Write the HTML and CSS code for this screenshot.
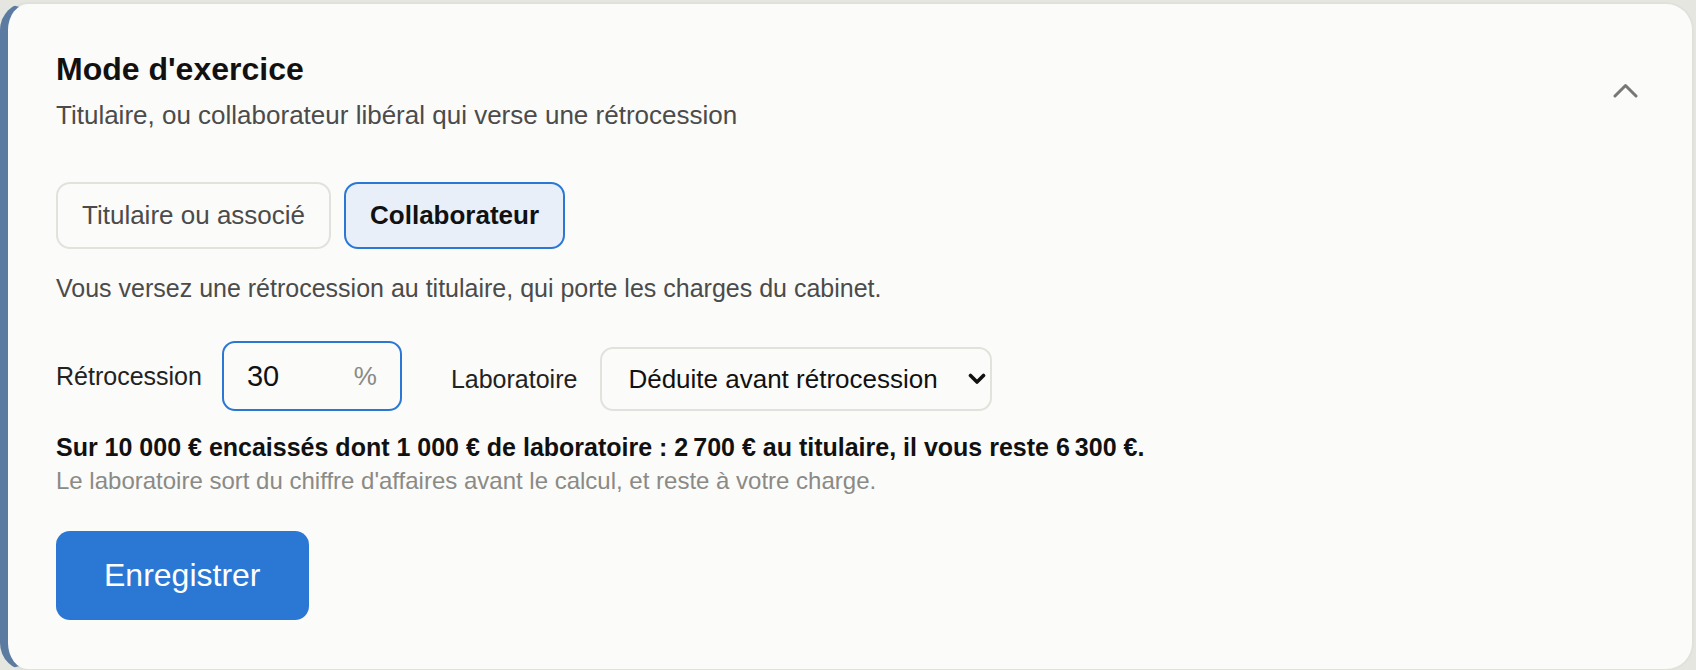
FILE: index.html
```html
<!DOCTYPE html>
<html lang="fr">

<head>
    <meta charset="UTF-8" />
    <meta name="viewport" content="width=device-width, initial-scale=1.0" />
    <title>Mode d'exercice</title>
    <link rel="stylesheet" href="styles.css">
</head>

<body>
    <section class="panel">
        <!-- En-tête repliable -->
        <header class="panel-header">
            <div>
                <h2>Mode d'exercice</h2>
                <p class="panel-sub">Titulaire, ou collaborateur libéral qui verse une rétrocession</p>
            </div>
            <button class="collapse-btn" type="button" aria-label="Replier">
                <svg width="26" height="16" viewBox="0 0 26 16">
                    <polyline points="3,13 13.5,2.5 24,13" fill="none" stroke="#777773" stroke-width="3" stroke-linecap="round" stroke-linejoin="round" />
                </svg>
            </button>
        </header>

        <!-- Choix du statut -->
        <div class="mode-toggle">
            <button class="mode-btn" type="button">Titulaire ou associé</button>
            <button class="mode-btn is-active" type="button">Collaborateur</button>
        </div>
        <p class="mode-hint">Vous versez une rétrocession au titulaire, qui porte les charges du cabinet.</p>

        <!-- Paramètres de rétrocession -->
        <div class="fields-row">
            <label class="field">
                <span class="field-label">Rétrocession</span>
                <span class="pct-input">
                    <input type="text" value="30" />
                    <span class="pct-unit">%</span>
                </span>
            </label>
            <label class="field field-select">
                <span class="field-label">Laboratoire</span>
                <span class="select-wrap">
                    <select>
                        <option>Déduite avant rétrocession</option>
                        <option>Incluse dans la rétrocession</option>
                    </select>
                    <svg class="select-arrow" width="18" height="12" viewBox="0 0 18 12">
                        <polyline points="2.5,2.5 9,9 15.5,2.5" fill="none" stroke="#111" stroke-width="3.6" stroke-linecap="round" stroke-linejoin="round" />
                    </svg>
                </span>
            </label>
        </div>

        <p class="summary">Sur 10 000 € encaissés dont 1 000 € de laboratoire : 2&#8239;700 € au titulaire, il vous reste 6&#8239;300 €.</p>
        <p class="summary-note">Le laboratoire sort du chiffre d'affaires avant le calcul, et reste à votre charge.</p>

        <button class="save-btn" type="button">Enregistrer</button>
    </section>
</body>

</html>
```

FILE: styles.css
```css
* {
    margin: 0;
    padding: 0;
    box-sizing: border-box;
    font-family: "Liberation Sans", Arial, sans-serif;
}

body {
    background-color: #e6e6e1;
    color: #111;
    padding: 2px 2px 3px 0;
}

/* Panel */

.panel {
    background: #fbfbf9;
    border: 2px solid #e1e1dc;
    border-left: 8px solid #5b7ba0;
    border-radius: 28px;
    padding: 45px 54px 49px 48px;
}

.panel-header {
    display: flex;
    justify-content: space-between;
    align-items: center;
}

.panel-header h2 {
    font-size: 32px;
    line-height: 40px;
    font-weight: 700;
    color: #111;
}

.panel-sub {
    margin-top: 8px;
    font-size: 26px;
    line-height: 36px;
    color: #4b4b4b;
}

.collapse-btn {
    border: none;
    background: none;
    display: flex;
    cursor: pointer;
}

/* Mode toggle */

.mode-toggle {
    display: flex;
    gap: 13px;
    margin-top: 49px;
}

.mode-btn {
    font-size: 26px;
    line-height: 31px;
    padding: 16px 24px;
    border: 2px solid #e2e2dd;
    border-radius: 14px;
    background: #fbfbf9;
    color: #4b4b4b;
    cursor: pointer;
}

.mode-btn.is-active {
    background: #e8eff9;
    border-color: #2b78d4;
    color: #111;
    font-weight: 700;
}

.mode-hint {
    margin-top: 21px;
    font-size: 25px;
    line-height: 36px;
    color: #4b4b4b;
}

/* Fields */

.fields-row {
    display: flex;
    align-items: flex-end;
    gap: 49px;
    margin-top: 35px;
}

.field {
    display: flex;
    align-items: center;
    gap: 20px;
}

.field-select {
    gap: 23px;
}

.field-label {
    font-size: 25px;
    color: #222;
}

.pct-input {
    display: flex;
    align-items: center;
    width: 180px;
    height: 70px;
    padding: 0 23px;
    border: 2px solid #2b78d4;
    border-radius: 13px;
    background: #fbfbf9;
}

.pct-input input {
    width: 80px;
    flex: 1;
    border: none;
    outline: none;
    background: transparent;
    font-size: 29px;
    color: #111;
}

.pct-unit {
    font-size: 26px;
    color: #8a8a86;
}

.select-wrap {
    position: relative;
    display: flex;
}

.select-wrap select {
    appearance: none;
    -webkit-appearance: none;
    width: 392px;
    height: 64px;
    padding: 0 40px 0 26px;
    border: 2px solid #e2e2dd;
    border-radius: 13px;
    background: #fbfbf9;
    font-size: 26px;
    color: #111;
}

.select-arrow {
    position: absolute;
    right: 6px;
    top: 26px;
    pointer-events: none;
}

/* Summary */

.summary {
    margin-top: 19px;
    font-size: 25px;
    line-height: 34px;
    font-weight: 700;
    color: #111;
}

.summary-note {
    font-size: 24px;
    line-height: 34px;
    color: #8a8a86;
}

.save-btn {
    margin-top: 33px;
    padding: 0 48px;
    height: 89px;
    border: none;
    border-radius: 14px;
    background: #2b78d4;
    color: #fff;
    font-size: 32px;
    cursor: pointer;
}
```
